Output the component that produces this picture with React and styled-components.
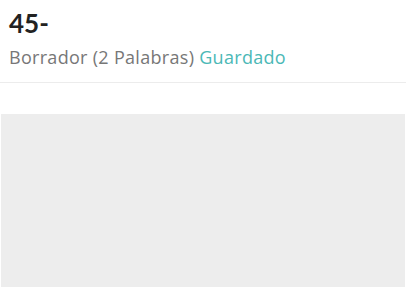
import React from 'react';
import styled, { createGlobalStyle } from 'styled-components';

const Global = createGlobalStyle`
	html, body {
		margin: 0;
		padding: 0;
		background: #fff;
		font-family: 'Lato', 'Open Sans', sans-serif;
	}
`;

const Page = styled.div`
	width: 406px;
	height: 288px;
	overflow: hidden;
	display: flex;
	flex-direction: column;
`;

const Header = styled.header`
	padding: 8px 9px 0;
	height: 83px;
	box-sizing: border-box;
	border-bottom: 1px solid #ececec;
`;

const Title = styled.h1`
	margin: 0;
	font-size: 26px;
	font-weight: 700;
	line-height: 30px;
	color: #222;
`;

const Status = styled.p`
	margin: 8px 0 0;
	font-family: 'Open Sans', sans-serif;
	font-size: 18px;
	letter-spacing: 0.3px;
	line-height: 22px;
	color: #777;
`;

const Saved = styled.span`
	color: #4bb8b6;
`;

const Editor = styled.div`
	margin: 31px 1px 0;
	height: 173px;
	background: #ededed;
`;

const App = () => (
	<Page>
		<Global />
		<Header>
			<Title>45-</Title>
			<Status>
				Borrador (2 Palabras) <Saved>Guardado</Saved>
			</Status>
		</Header>
		<Editor />
	</Page>
);

export default App;
